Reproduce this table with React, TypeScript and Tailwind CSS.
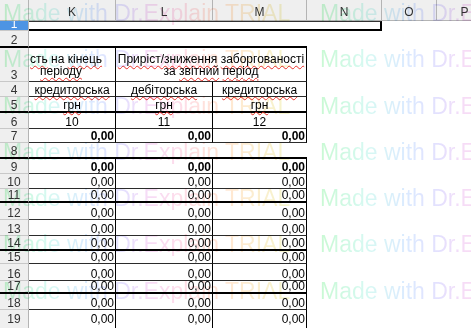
import React from "react";

const GRID = "grid grid-cols-[29px_87px_97px_94px_75px_55px_56px]";
const W = "underline decoration-wavy decoration-[#e8302a] decoration-1 underline-offset-[2px]";
const WM =
  "inline-block whitespace-nowrap text-[23px] leading-[23px] text-transparent bg-clip-text bg-[linear-gradient(90deg,#c9f9d3_0%,#d6f9f2_16%,#dbeaff_30%,#e4e0fe_42%,#f6dcf7_50%,#fddcec_60%,#ffe1dc_70%,#ffe9d2_80%,#f5f5cc_100%)]";

type RowProps = { n?: number; h: string; strong?: boolean; active?: boolean; last?: boolean; children?: React.ReactNode };

function Row({ n, h, strong, active, last, children }: RowProps) {
  return (
    <div className={`${GRID} ${h}`}>
      <div
        className={`flex items-end justify-center overflow-hidden border-r border-r-[#b4b4b4] leading-[11px] ${
          last ? "" : strong ? "border-b-2 border-b-black" : "border-b border-b-[#c8c8c8]"
        } ${active ? "bg-[#4d94e3] text-white" : "bg-[#efefef] text-[#333]"}`}
      >
        {n}
      </div>
      {children}
    </div>
  );
}

type CellProps = {
  strong?: boolean;
  vert?: boolean;
  last?: boolean;
  align?: "center" | "right";
  bold?: boolean;
  children?: React.ReactNode;
};

function TCell({ strong, vert = true, last, align = "right", bold, children }: CellProps) {
  return (
    <div
      className={`flex items-end whitespace-nowrap leading-[11px] ${
        last ? "" : strong ? "border-b-2 border-b-black" : "border-b border-b-[#2b2b2b]"
      } ${vert ? "border-r border-r-black" : ""} ${align === "center" ? "justify-center" : "justify-end pr-[1px]"} ${
        bold ? "font-bold" : ""
      }`}
    >
      {children}
    </div>
  );
}

type DataRow = { n: number; h: string; strong?: boolean; bold?: boolean; last?: boolean };

const dataRows: DataRow[] = [
  { n: 9, h: "h-[15px]", bold: true },
  { n: 10, h: "h-[15px]" },
  { n: 11, h: "h-[14px]", strong: true },
  { n: 12, h: "h-[17px]" },
  { n: 13, h: "h-[16px]" },
  { n: 14, h: "h-[15px]", strong: true },
  { n: 15, h: "h-[13px]" },
  { n: 16, h: "h-[17px]" },
  { n: 17, h: "h-[13px]", strong: true },
  { n: 18, h: "h-[16px]" },
  { n: 19, h: "h-[15px]", last: true },
];

export default function App() {
  return (
    <div className="relative w-[471px] h-[328px] overflow-hidden bg-white font-['Liberation_Sans',Arial,sans-serif] text-[12px] text-black">
      {/* column headers */}
      <div className={`${GRID} h-[21px] bg-[#efefef] text-[#333] border-b border-b-[#b4b4b4]`}>
        <div className="border-r border-r-[#b4b4b4]" />
        {["K", "L", "M", "N", "O", "P"].map((c) => (
          <div key={c} className="flex justify-center pt-[6px] leading-[12px] border-r border-r-[#b4b4b4]">
            {c}
          </div>
        ))}
      </div>

      <Row n={1} h="h-[10px]" active>
        <div className="col-span-4 border-t border-t-[#333] border-b-2 border-b-black border-r-2 border-r-black" />
      </Row>

      <Row n={2} h="h-[17px]" strong>
        <div className="col-span-3 border-b-2 border-b-black" />
      </Row>

      <Row n={3} h="h-[34px]">
        <div className="flex flex-col justify-end pb-[4px] leading-[12px] whitespace-nowrap overflow-hidden border-b border-b-[#2b2b2b] border-r border-r-black">
          <div className="pl-[1px]">
            <span className={W}>сть</span> на <span className={W}>кінець</span>
          </div>
          <div className="pl-[11px]">
            <span className={W}>періоду</span>
          </div>
        </div>
        <div className="col-span-2 flex flex-col items-center justify-end pb-[4px] leading-[12px] whitespace-nowrap border-b border-b-[#2b2b2b] border-r border-r-black">
          <div>
            <span className={W}>Приріст/зниження</span> <span className={W}>заборгованості</span>
          </div>
          <div>
            за <span className={W}>звітний</span> <span className={W}>період</span>
          </div>
        </div>
      </Row>

      <Row n={4} h="h-[15px]">
        <TCell align="center">
          <span className={W}>кредиторська</span>
        </TCell>
        <TCell align="center">
          <span className={W}>дебіторська</span>
        </TCell>
        <TCell align="center">
          <span className={W}>кредиторська</span>
        </TCell>
      </Row>

      <Row n={5} h="h-[16px]" strong>
        <TCell align="center" strong>
          <span className={W}>грн</span>
        </TCell>
        <TCell align="center" strong>
          <span className={W}>грн</span>
        </TCell>
        <TCell align="center" strong>
          <span className={W}>грн</span>
        </TCell>
      </Row>

      <Row n={6} h="h-[16px]">
        <TCell align="center">10</TCell>
        <TCell align="center">11</TCell>
        <TCell align="center">12</TCell>
      </Row>

      <Row n={7} h="h-[14px]">
        <TCell bold>0,00</TCell>
        <TCell bold>0,00</TCell>
        <TCell bold>0,00</TCell>
      </Row>

      <Row n={8} h="h-[16px]" strong>
        <TCell strong vert={false} />
        <TCell strong vert={false} />
        <TCell strong vert={false} />
      </Row>

      {dataRows.map((r) => (
        <Row key={r.n} n={r.n} h={r.h} strong={r.strong} last={r.last}>
          <TCell strong={r.strong} bold={r.bold} last={r.last}>
            0,00
          </TCell>
          <TCell strong={r.strong} bold={r.bold} last={r.last}>
            0,00
          </TCell>
          <TCell strong={r.strong} bold={r.bold} last={r.last}>
            0,00
          </TCell>
        </Row>
      ))}

      {/* remaining sliver of row 19 */}
      <Row h="h-[6px]" last>
        <TCell last />
        <TCell last />
        <TCell last />
      </Row>

      {/* watermark overlay */}
      <div className="pointer-events-none absolute inset-0 mix-blend-multiply flex flex-col pt-[2px] gap-[23.3px]">
        {Array.from({ length: 7 }).map((_, i) => (
          <div key={i} className="flex shrink-0 pl-[3px] h-[23px]">
            <div className="w-[317px] shrink-0">
              <span className={WM}>Made with Dr.Explain TRIAL</span>
            </div>
            <div className="w-[317px] shrink-0">
              <span className={WM}>Made with Dr.Explain TRIAL</span>
            </div>
          </div>
        ))}
      </div>
    </div>
  );
}
